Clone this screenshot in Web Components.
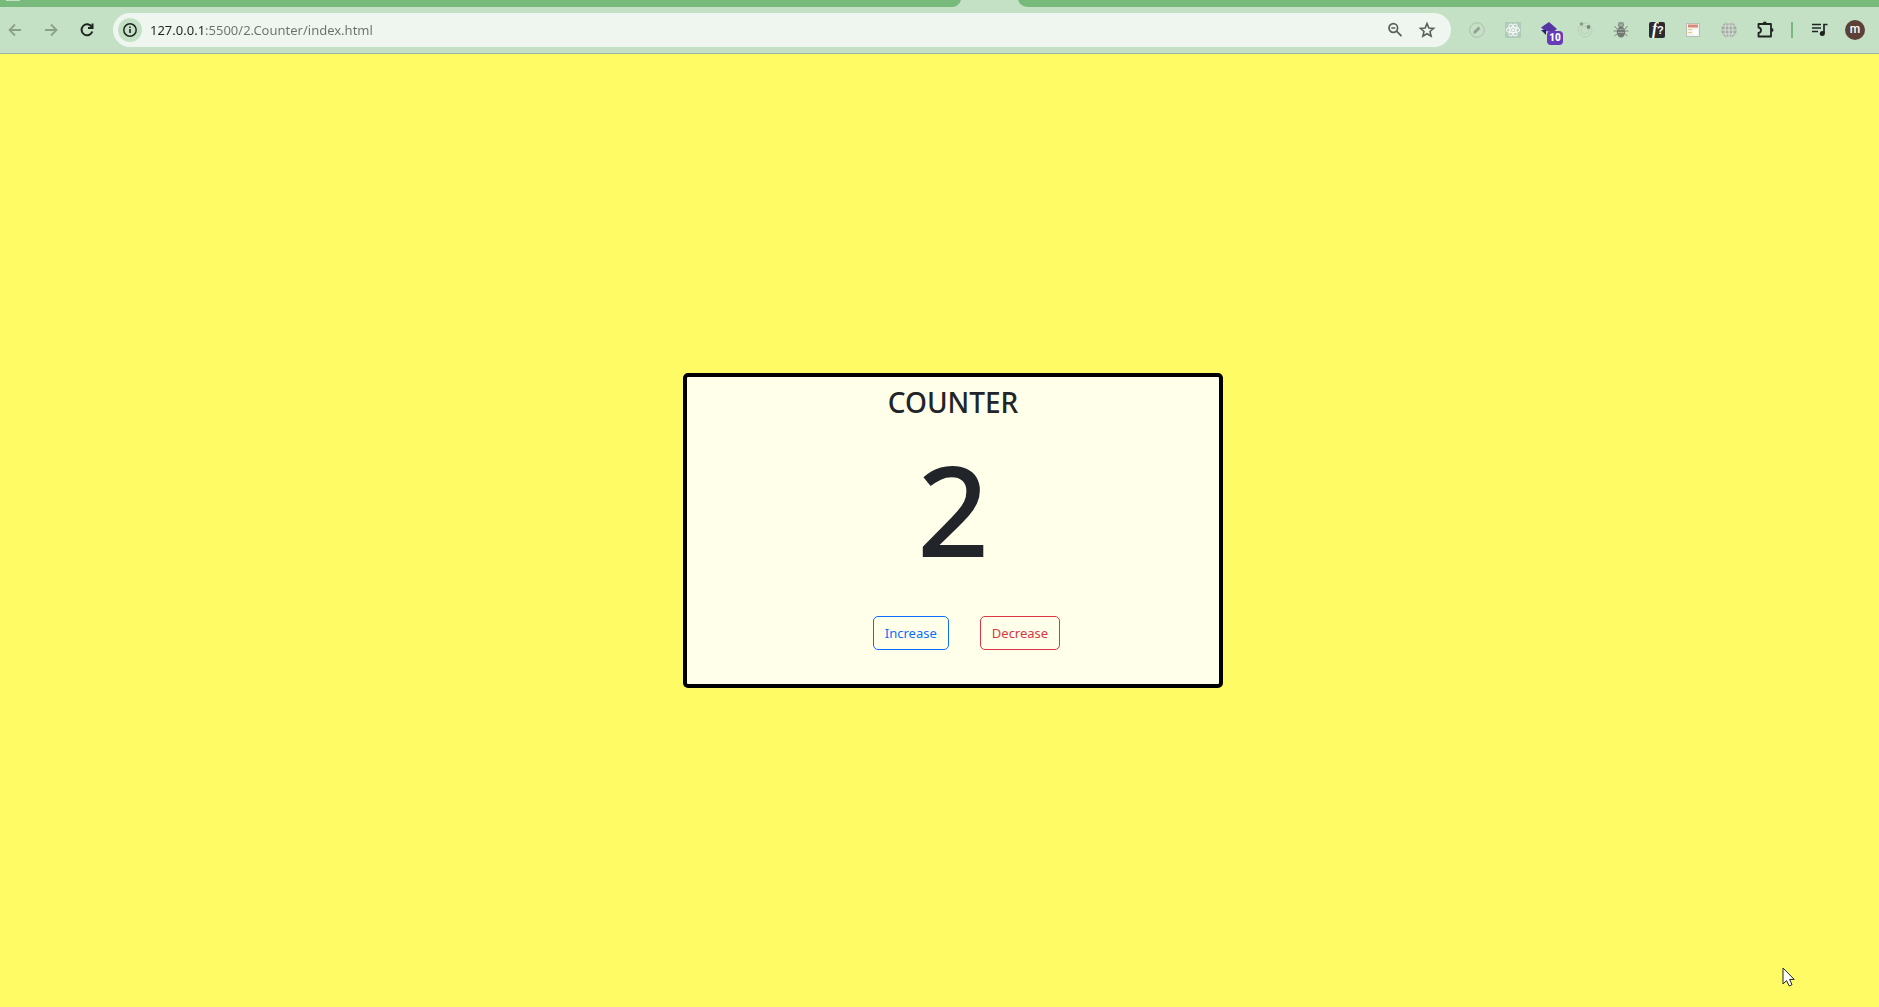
<!DOCTYPE html>
<html lang="en">
<head>
<meta charset="utf-8">
<title>Counter</title>
<style>
html, body { height: 100%; }
body { margin: 0; font-family: "Noto Sans", sans-serif; overflow: hidden; }
</style>
</head>
<body>
<browser-window></browser-window>

<template id="tpl-window">
<style>
:host { display: flex; flex-direction: column; height: 100%; position: relative; background: #fffb64; }
counter-stage { flex: 1; }
.pointer { position: absolute; right: 83px; bottom: 20px; width: 14px; height: 20px; }
</style>
<tab-strip></tab-strip>
<tool-bar></tool-bar>
<counter-stage><counter-card value="2">COUNTER</counter-card></counter-stage>
<svg class="pointer" viewBox="0 0 14 20" aria-hidden="true"><path d="M1 1V17L4.5 13.6L7.3 19L10 17.7L7.6 12.4H12.2Z" fill="#fff" stroke="#222" stroke-width="1"/></svg>
</template>

<template id="tpl-tabs">
<style>
:host { display: flex; justify-content: center; height: 7px; background: #78b97c; }
.icon { position: absolute; left: 6px; top: 0; width: 14px; height: 1px; background: #c5e1c5; }
svg { width: 74px; height: 7px; margin-left: 100px; }
</style>
<span class="icon"></span>
<svg viewBox="0 0 74 7" aria-hidden="true"><path d="M0 7Q6 6 8 0H65Q67 6 74 7Z" fill="#c5e1c5"/></svg>
</template>

<template id="tpl-bar">
<style>
:host { display: flex; align-items: center; height: 46px; background: #c5e1c5; border-bottom: 1px solid #9cb49d; color: #1f2421; }
nav, .tools { display: flex; align-items: center; }
nav { margin-right: 8px; margin-left: -3px; }
button { display: grid; place-items: center; width: 36px; height: 36px; padding: 0; border: 0; background: none; color: inherit; }
button:disabled { color: #8aa08b; }
svg { display: block; width: 24px; height: 24px; overflow: visible; }
.omnibox { flex: 1; display: flex; align-items: center; height: 34px; border-radius: 17px; background: #eff6ef; color: #5a5f5b; }
.omnibox button { width: 32px; }
.omnibox .info { width: 24px; height: 24px; margin: 0 8px 0 5px; border-radius: 12px; background: #c5e1c5; color: #1f2421; }
input { flex: 1; min-width: 0; height: 30px; border: 0; padding: 0; outline: 0; font: 13px/30px "Noto Sans", sans-serif; color: #6b716c;
  background: linear-gradient(90deg, #1f2421 55px, #6b716c 55px); background-clip: text; -webkit-background-clip: text; -webkit-text-fill-color: transparent; }
.omnibox .star { margin-right: 8px; }
.tools { margin: 0 6px 0 8px; }
.sep { width: 2px; height: 16px; margin: 0 8px; background: #78b97c; }
.avatar span { width: 20px; height: 20px; border-radius: 10px; background: #5d4037; color: #fff; font: 500 12px/18px Roboto, sans-serif; }
.badged { position: relative; }
.badged span { position: absolute; left: 16px; top: 19px; width: 16px; height: 14px; border-radius: 4px; background: #673ab7; color: #fff; font: 900 10px/14px Roboto, sans-serif; }
.fx { fill: #fff; font: italic 700 16px "Liberation Serif", serif; }
.fx tspan { font: 700 11px "Liberation Sans", sans-serif; }
</style>
<nav aria-label="Navigation">
<button disabled aria-label="Back"><svg viewBox="0 0 24 24" fill="none" stroke="currentColor" stroke-width="1.8"><path d="M18 12H7M12 6.500L6.500 12L12 17.500"/></svg></button>
<button disabled aria-label="Forward"><svg viewBox="0 0 24 24" fill="none" stroke="currentColor" stroke-width="1.8"><path d="M6 12H17M12 6.500L17.500 12L12 17.500"/></svg></button>
<button aria-label="Reload"><svg viewBox="0 0 24 24" fill="none" stroke="currentColor" stroke-width="2"><path d="M16.800 9A5.500 5.500 0 1 0 17.300 13.500"/><path d="M17.500 5.500V10H13"/></svg></button>
</nav>
<div class="omnibox">
<button class="info" aria-label="View site information"><svg viewBox="0 0 24 24"><circle cx="12" cy="12" r="6.200" fill="none" stroke="currentColor" stroke-width="1.500"/><path d="M11.200 11h1.600v4h-1.600zM11.200 8.500h1.600v1.500h-1.600z" fill="currentColor"/></svg></button>
<input type="text" aria-label="Address" value="127.0.0.1:5500/2.Counter/index.html" spellcheck="false">
<button aria-label="Zoom"><svg viewBox="0 0 24 24" fill="none" stroke="currentColor" stroke-width="1.700"><circle cx="10.300" cy="10" r="4.300"/><path d="M8.300 10h4M13.500 13.200L18.500 18.200"/></svg></button>
<button class="star" aria-label="Bookmark this tab"><svg viewBox="0 0 24 24" fill="none" stroke="currentColor" stroke-width="1.600"><path d="M12 5.600L13.900 10L18.600 10.400L15 13.500L16.100 18.100L12 15.700L7.900 18.100L9 13.500L5.400 10.400L10.100 10Z"/></svg></button>
</div>
<div class="tools">
<button aria-label="Pencil extension"><svg viewBox="0 0 24 24"><circle cx="12" cy="12" r="7.300" fill="none" stroke="#aebdae"/><path d="M8.500 13.500L13.500 8.500L15.500 10.500L10.500 15.500L8.500 15.800Z" fill="#94a095"/></svg></button>
<button aria-label="React developer tools"><svg viewBox="0 0 24 24"><path d="M4 4H20V20H4Z" fill="#afcbb9"/><g fill="none" stroke="#f2f7f3" stroke-width="1.100"><ellipse cx="12" cy="12" rx="6.500" ry="2.600"/><ellipse cx="12" cy="12" rx="6.500" ry="2.600" transform="rotate(60 12 12)"/><ellipse cx="12" cy="12" rx="6.500" ry="2.600" transform="rotate(120 12 12)"/></g><circle cx="12" cy="12" r="1.500" fill="#f2f7f3"/></svg></button>
<button class="badged" aria-label="Diamond extension"><svg viewBox="0 0 24 24"><path d="M12 4L20 11L16 14L8 13L4 9.500Z" fill="#5535a5"/><path d="M4 12L9 17V12Z" fill="#2b1f74"/></svg><span>10</span></button>
<button aria-label="Orbit extension"><svg viewBox="0 0 24 24"><circle cx="12" cy="12" r="7" fill="none" stroke="#b9cdb9"/><circle cx="12" cy="12" r="4" fill="none" stroke="#b9cdb9"/><circle cx="8.500" cy="6" r="1.800" fill="#8b998c"/><circle cx="15.500" cy="9" r="1.900" fill="#7b857c"/></svg></button>
<button aria-label="Bug extension"><svg viewBox="0 0 24 24"><g fill="none" stroke="#7d857e" stroke-width="1"><path d="M9.500 4.500L11 6.500M14.500 4.500L13 6.500M5.500 8L8 11M4.500 13H8M18.500 8L16 11M19.500 13H16M5.500 18L8.500 15.500M18.500 18L15.500 15.500"/></g><circle cx="12" cy="7" r="2.400" fill="#a5ada6" stroke="#737a75"/><ellipse cx="12" cy="14" rx="4.200" ry="5.500" fill="#737a75"/><path d="M9 11Q12 12.500 15 11M9 14.500H15" stroke="#a0a8a1" fill="none"/></svg></button>
<button aria-label="Font extension"><svg viewBox="0 0 24 24"><rect x="4" y="4" width="16" height="16" rx="2" fill="#2b2b30"/><text class="fx" x="7" y="16">f<tspan x="12" y="16">?</tspan></text></svg></button>
<button aria-label="Page extension"><svg viewBox="0 0 24 24"><path d="M5.500 5.500H18.500V18.500H5.500Z" fill="#f5f3ee" stroke="#b9bdb8"/><path d="M7 6.500H17V9.500H7Z" fill="#d98a76"/><path d="M7 11.500H11M7 14.500H11" stroke="#e5cf7a"/><path d="M12 12H17V17H12Z" fill="#fff"/></svg></button>
<button aria-label="Globe extension"><svg viewBox="0 0 24 24"><circle cx="12" cy="12" r="7.800" fill="#a3aca4"/><g fill="none" stroke="#d8e4d8"><path d="M12 4V20M4 12H20M5.500 8H18.500M5.500 16H18.500"/><ellipse cx="12" cy="12" rx="4" ry="8"/></g></svg></button>
<button aria-label="Extensions"><svg viewBox="0 0 24 24"><path d="M5.500 6H18V18.500H5.500V15Q8 14.500 8 12.200T5.500 9.500Z" fill="none" stroke="currentColor" stroke-width="1.800" stroke-linejoin="round"/><path d="M9.800 5.500a2 2 0 0 1 4 0zM18.500 10a2 2 0 0 1 0 4z" fill="currentColor"/></svg></button>
<span class="sep"></span>
<button aria-label="Media controls"><svg viewBox="0 0 24 24"><path d="M5 6.500H14M5 10H14M5 13.500H11M17 15.500V6.500H20.500" fill="none" stroke="currentColor" stroke-width="1.700"/><circle cx="15.300" cy="15.500" r="2.500" fill="currentColor"/></svg></button>
<button class="avatar" aria-label="Profile m"><span>m</span></button>
</div>
</template>

<template id="tpl-stage">
<style>:host { display: grid; place-items: center; padding-left: 27px; background: #fffb64; }</style>
<slot></slot>
</template>

<template id="tpl-card">
<style>
:host { display: flex; flex-direction: column; align-items: center; box-sizing: border-box; width: 540px; max-width: 100%; padding: 7px 0 34px; border: 4px solid #000; border-radius: 5px; background: #ffffea; color: #212529; }
h1, output { margin: 0; font-weight: 500; }
h1 { font-size: 28px; line-height: 36px; }
output { font-size: 126px; line-height: 156px; margin-top: 10px; }
.actions { display: flex; gap: 31px; padding-left: 27px; margin-top: 30px; }
</style>
<h1><slot></slot></h1>
<output></output>
<div class="actions">
<counter-button tone="primary">Increase</counter-button>
<counter-button tone="danger">Decrease</counter-button>
</div>
</template>

<template id="tpl-button">
<style>
:host { display: block; --tone: #0d6efd; }
:host([tone="danger"]) { --tone: #dc3545; }
button { height: 34px; padding: 0 11px; border: 1px solid var(--tone); border-radius: 5px; background: transparent; color: var(--tone); font: 13px/20px "Noto Sans", sans-serif; cursor: pointer; }
</style>
<button type="button"><slot></slot></button>
</template>

<script>
function stamp(host, id) {
  const root = host.attachShadow({ mode: "open" });
  root.append(document.getElementById(id).content.cloneNode(true));
  return root;
}
customElements.define("counter-button", class extends HTMLElement {
  constructor() { super(); stamp(this, "tpl-button"); }
});
customElements.define("counter-card", class extends HTMLElement {
  static observedAttributes = ["value"];
  constructor() {
    super();
    const root = stamp(this, "tpl-card");
    this.out = root.querySelector("output");
    const [up, down] = root.querySelectorAll("counter-button");
    up.addEventListener("click", () => this.step(1));
    down.addEventListener("click", () => this.step(-1));
  }
  step(n) { this.setAttribute("value", Number(this.getAttribute("value")) + n); }
  attributeChangedCallback(name, old, value) { this.out.textContent = value; }
});
for (const [tag, id] of [["counter-stage", "tpl-stage"], ["tab-strip", "tpl-tabs"], ["tool-bar", "tpl-bar"], ["browser-window", "tpl-window"]]) {
  customElements.define(tag, class extends HTMLElement {
    constructor() { super(); stamp(this, id); }
  });
}
</script>
</body>
</html>
